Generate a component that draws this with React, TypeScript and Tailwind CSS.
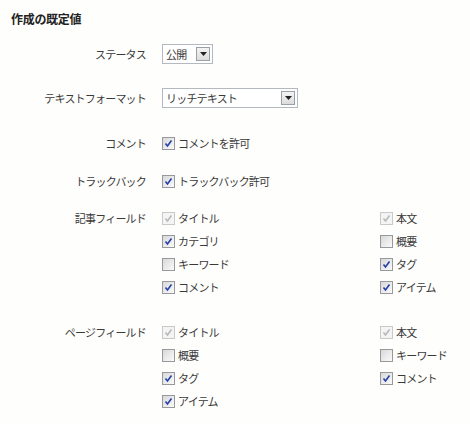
import React from "react";

type Item = { label: string; checked: boolean; disabled?: boolean };

function Box({ checked, disabled }: { checked: boolean; disabled?: boolean }) {
  return (
    <span
      className={`relative inline-flex h-[13px] w-[13px] shrink-0 items-center justify-center border ${
        disabled ? "border-[#c9c9c9] bg-[#f4f4f4]" : "border-[#97999c] bg-gradient-to-br from-[#d8d8d8] to-[#fbfbfb]"
      }`}
    >
      {checked && (
        <svg width="9" height="9" viewBox="0 0 9 9">
          <path
            d="M1.5 4.5 L3.5 7 L7.5 1.5"
            fill="none"
            stroke={disabled ? "#b8b8b8" : "#2340a8"}
            strokeWidth="1.6"
          />
        </svg>
      )}
    </span>
  );
}

function Check({ label, checked, disabled }: Item) {
  return (
    <div className="flex h-[23px] items-center gap-[3px]">
      <Box checked={checked} disabled={disabled} />
      <span>{label}</span>
    </div>
  );
}

function Select({ value, width }: { value: string; width: string }) {
  return (
    <div className={`flex h-[20px] items-center justify-between border border-[#b4b9bf] bg-white pl-[3px] pr-[2px] ${width}`}>
      <span>{value}</span>
      <span className="flex h-[14px] w-[14px] items-center justify-center border border-[#9aa0a8] bg-gradient-to-b from-[#f4f4f4] to-[#dcdcdc]">
        <svg width="7" height="4" viewBox="0 0 7 4">
          <path d="M0 0 H7 L3.5 4 Z" fill="#222" />
        </svg>
      </span>
    </div>
  );
}

function Row({ label, className, children }: { label: string; className?: string; children: React.ReactNode }) {
  return (
    <div className={`flex ${className ?? ""}`}>
      <div className="flex h-[23px] w-[146px] shrink-0 items-center justify-end">{label}</div>
      <div className="ml-[16px] flex-1">{children}</div>
    </div>
  );
}

const articleFields: Item[][] = [
  [
    { label: "タイトル", checked: true, disabled: true },
    { label: "カテゴリ", checked: true },
    { label: "キーワード", checked: false },
    { label: "コメント", checked: true },
  ],
  [
    { label: "本文", checked: true, disabled: true },
    { label: "概要", checked: false },
    { label: "タグ", checked: true },
    { label: "アイテム", checked: true },
  ],
];

const pageFields: Item[][] = [
  [
    { label: "タイトル", checked: true, disabled: true },
    { label: "概要", checked: false },
    { label: "タグ", checked: true },
    { label: "アイテム", checked: true },
  ],
  [
    { label: "本文", checked: true, disabled: true },
    { label: "キーワード", checked: false },
    { label: "コメント", checked: true },
  ],
];

function Fields({ cols }: { cols: Item[][] }) {
  return (
    <div className="flex">
      {cols.map((col, i) => (
        <div key={i} className={i === 0 ? "w-[218px]" : ""}>
          {col.map((it) => (
            <Check key={it.label} {...it} />
          ))}
        </div>
      ))}
    </div>
  );
}

export default function App() {
  return (
    <div
      className="h-[424px] w-[470px] bg-[#fefefc] pt-[12px] text-[11px] text-[#3a3a3a] tracking-[-0.8px]"
      style={{ fontFamily: '"Noto Sans CJK JP", sans-serif' }}
    >
      <h2 className="pl-[11px] text-[12px] font-bold leading-[14px] tracking-[-0.3px] text-[#222]">作成の既定値</h2>

      <div className="mt-[18px] flex items-center">
        <div className="w-[146px] text-right">ステータス</div>
        <div className="ml-[16px]">
          <Select value="公開" width="w-[51px]" />
        </div>
      </div>

      <div className="mt-[24px] flex items-center">
        <div className="w-[146px] text-right">テキストフォーマット</div>
        <div className="ml-[16px]">
          <Select value="リッチテキスト" width="w-[136px]" />
        </div>
      </div>

      <Row label="コメント" className="mt-[24px]">
        <Check label="コメントを許可" checked />
      </Row>

      <Row label="トラックバック" className="mt-[15px]">
        <Check label="トラックバック許可" checked />
      </Row>

      <Row label="記事フィールド" className="mt-[14px]">
        <Fields cols={articleFields} />
      </Row>

      <Row label="ページフィールド" className="mt-[22px]">
        <Fields cols={pageFields} />
      </Row>
    </div>
  );
}
